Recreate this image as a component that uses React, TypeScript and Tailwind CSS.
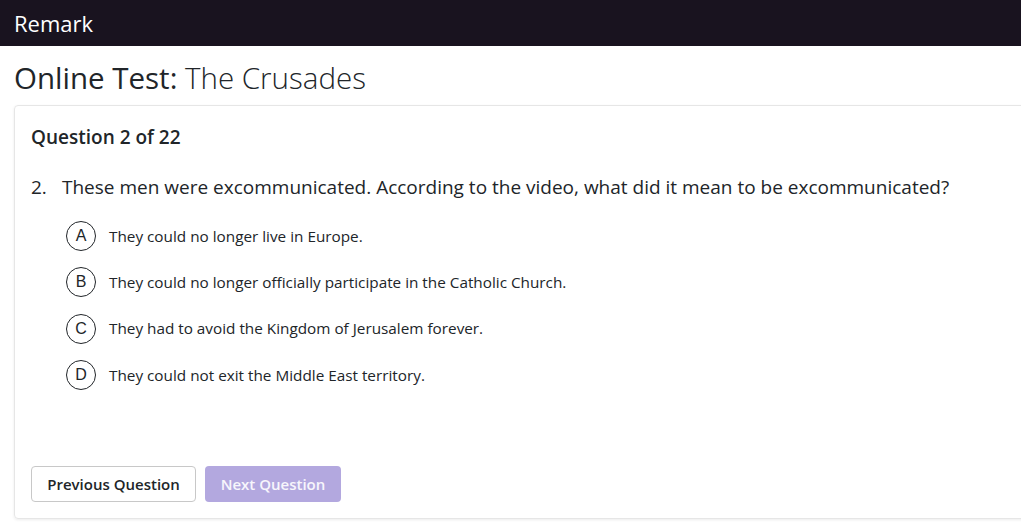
const options = [
  { letter: "A", text: "They could no longer live in Europe." },
  { letter: "B", text: "They could no longer officially participate in the Catholic Church." },
  { letter: "C", text: "They had to avoid the Kingdom of Jerusalem forever." },
  { letter: "D", text: "They could not exit the Middle East territory." },
];

export default function App() {
  return (
    <div
      className="h-[524px] w-[1021px] overflow-hidden bg-white text-[#212529]"
      style={{ fontFamily: '"Open Sans", "Noto Sans", sans-serif' }}
    >
      <header className="flex h-[46px] items-center bg-[#19131f] px-[14px]">
        <span className="text-[22px] leading-none text-white">Remark</span>
      </header>

      <div className="pl-[14px] pt-[14px]">
        <h1 className="text-[29.5px] leading-[36px]">
          Online Test: <span className="font-light">The Crusades</span>
        </h1>

        <div className="mt-[9px] flex h-[414px] w-[1030px] flex-col rounded-[4px] border border-[#e6e6e6] px-[16px] pt-[18px] pb-[16px] shadow-[0_1px_3px_rgba(0,0,0,0.08)]">
          <h2 className="text-[19px] font-semibold leading-[26px]">Question 2 of 22</h2>

          <div className="mt-[24px] flex text-[19px] leading-[26px]">
            <span className="w-[31px]">2.</span>
            <span>
              These men were excommunicated. According to the video, what did it mean to be excommunicated?
            </span>
          </div>

          <ul className="mt-[21px] flex flex-col gap-[16.4px] pl-[35px]">
            {options.map((o) => (
              <li key={o.letter} className="flex items-center gap-[13px]">
                <span className="flex h-[30px] w-[30px] items-center justify-center rounded-full border-[1.5px] border-[#212529] font-['Liberation_Sans',sans-serif] text-[16px] leading-none">
                  {o.letter}
                </span>
                <span className="text-[15.3px]">{o.text}</span>
              </li>
            ))}
          </ul>

          <div className="mt-auto flex gap-[9px]">
            <button className="h-[36px] w-[165px] rounded-[4px] border border-[#c8c8c8] bg-white text-[15px] font-semibold text-[#212529]">
              Previous Question
            </button>
            <button className="h-[36px] w-[136px] rounded-[4px] bg-[#b3a8df] text-[15px] font-semibold text-white/90">
              Next Question
            </button>
          </div>
        </div>
      </div>
    </div>
  );
}
